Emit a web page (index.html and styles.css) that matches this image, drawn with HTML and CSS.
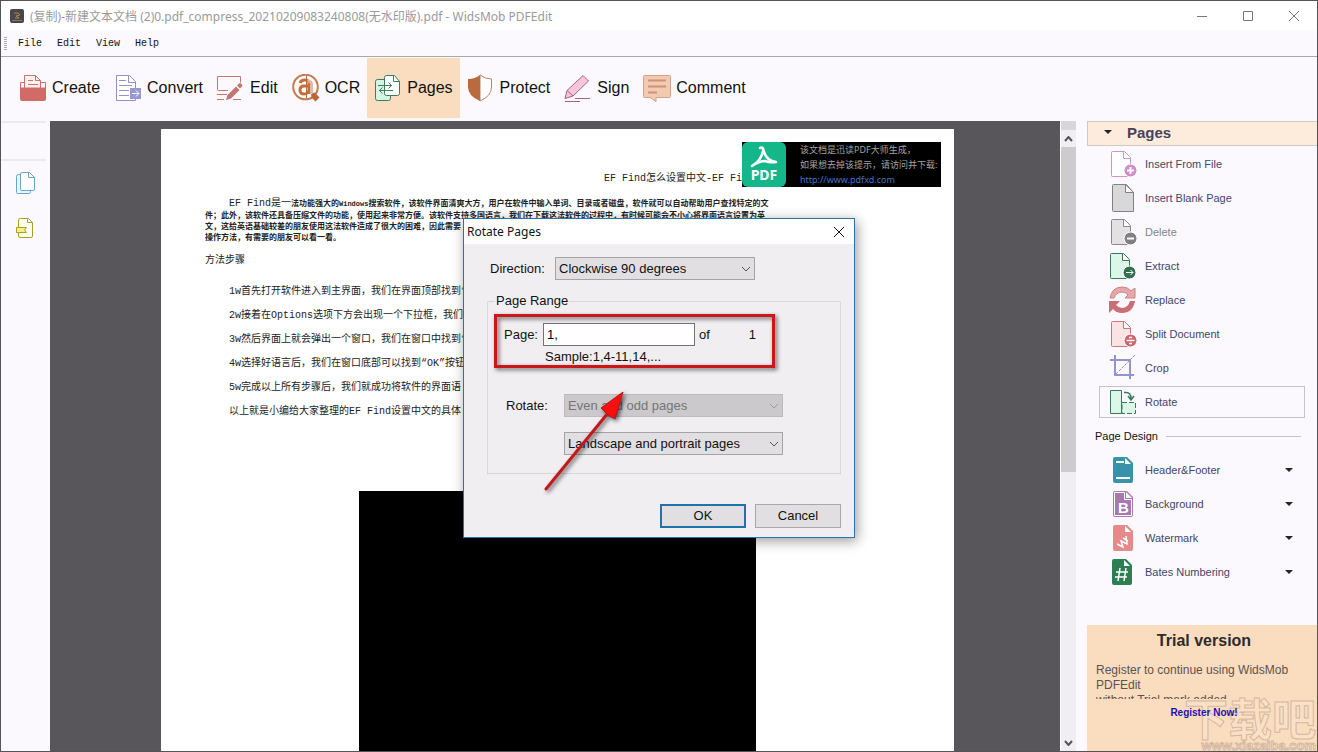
FILE: index.html
```html
<!DOCTYPE html>
<html lang="zh-CN">
<head>
  <meta charset="UTF-8" />
  <meta name="viewport" content="width=device-width, initial-scale=1" />
  <title>WidsMob PDFEdit</title>
  <link rel="stylesheet" href="styles.css">
</head>
<body>

<div class="window">
  <!-- Title bar -->
  <header class="titlebar">
    <svg class="app-icon" width="14" height="14" viewBox="0 0 14 14"><rect width="14" height="14" rx="2" fill="#4b464b"/><path d="M4 4h4l2 2-4 1 3 2H5" fill="none" stroke="#a98a4e"/><path d="M2 11.500h10" stroke="#85757a"/></svg>
    <h1 class="title">(复制)-新建文本文档 (2)0.pdf_compress_20210209083240808(无水印版).pdf - WidsMob PDFEdit</h1>
    <div class="window-buttons">
      <button type="button" aria-label="Minimize"><svg width="12" height="12" viewBox="0 0 12 12"><path d="M1 6.500h10"/></svg></button>
      <button type="button" aria-label="Maximize"><svg width="12" height="12" viewBox="0 0 12 12"><path d="M1.500 1.500h9v9h-9z"/></svg></button>
      <button type="button" aria-label="Close"><svg width="12" height="12" viewBox="0 0 12 12"><path d="M1 1l10 10M11 1L1 11"/></svg></button>
    </div>
  </header>

  <!-- Menu -->
  <nav class="menubar">
    <span class="grip"></span>
    <button type="button">File</button>
    <button type="button">Edit</button>
    <button type="button">View</button>
    <button type="button">Help</button>
  </nav>

  <!-- Toolbar -->
  <div class="toolbar">
    <button type="button">
      <svg width="28" height="28" viewBox="0 0 28 28" fill="none" stroke="#c9716c"><path d="M1.500 14V8.500h4M5.500 14V1.500h11l5 5V14M21.500 8.500h5V14" fill="#fdf0ee"/><path d="M16.500 1.500v5h5M9 6.500h5M9 10.500h10"/><path d="M1 13.500h26V25q0 2-2 2H3q-2 0-2-2z" fill="#d26a66" stroke="none"/></svg>
      <span>Create</span>
    </button>
    <button type="button">
      <svg width="28" height="28" viewBox="0 0 28 28" fill="none" stroke="#9292c6"><path d="M2.500 1.500h13l6 6v19h-19z" fill="#fff"/><path d="M14.500 1.500v7h7M5 6.500h7M5 11.500h13M5 16.500h10M5 21.500h10"/><path d="M16 14h11v11H16z" fill="#9697d5" stroke="none"/><path d="M18 19.500h7M22 16.500l3 3-3 3" stroke="#fff"/></svg>
      <span>Convert</span>
    </button>
    <button type="button">
      <svg width="28" height="28" viewBox="0 0 28 28" fill="none" stroke="#c17772"><path d="M11 16.500H1.500q-1 0-1-1V2.500h23v6M0 20.500h10M0 25.500h7M16 25.500h8" /><path d="M9 26l1.500-5L19 12.500l3.500 3.500L14 24.500zM20 11.500l2-2q1-1 2 0l1 1q1 1 0 2l-2 2z" fill="#c17772" stroke="none"/></svg>
      <span>Edit</span>
    </button>
    <button type="button">
      <svg width="28" height="28" viewBox="0 0 28 28"><circle cx="13.500" cy="13" r="12.300" fill="#fff" stroke="#c67a4d" stroke-width="2"/><path d="M19 20l3.500-1.500 5 5-4 4-4-4z" fill="#bd6736"/><path d="M8 9q1-3 5-3 4 0 4 4v10M17 12h-5q-4 0-4 4t4 4q4 0 5-4" fill="none" stroke="#c26f40" stroke-width="3"/><path d="M15.500 7q5 0 4 5v7" fill="none" stroke="#e7b79d" stroke-width="3"/><path d="M14.500 2v22" stroke="#bd6736"/></svg>
      <span>OCR</span>
    </button>
    <button type="button" class="active">
      <svg width="28" height="28" viewBox="0 0 28 28" fill="none" stroke="#3b7e5c"><path d="M11 5.500H3.500q-2 0-2 2v17q0 2 2 2h11q2 0 2-2V21" fill="#d4f5e3"/><path d="M12.500 1.500h8l5 6v12q0 2-2 2h-11q-2 0-2-2v-16q0-2 2-2z" fill="#fff"/><path d="M19.500 1.500v6h6M4 11.500h14M14.500 8.500l3 3-3 3M19 16.500H5M8.500 13.500l-3 3 3 3" /></svg>
      <span>Pages</span>
    </button>
    <button type="button">
      <svg width="28" height="28" viewBox="0 0 28 28"><path d="M13 1q5 4 11.500 4v8q0 9-11.500 14z" fill="#fff" stroke="#b78668"/><path d="M13 1q-5 4-12 4v8q0 9 12 14z" fill="#ba6a3f"/></svg>
      <span>Protect</span>
    </button>
    <button type="button">
      <svg width="28" height="28" viewBox="0 0 28 28" stroke="#a76280"><path d="M1 24.500l2-8L19 1.500l5.500 5.500L9 22z" fill="#f7c5dc"/><path d="M3 16.500l6 5.500" fill="none"/><path d="M11 24.500h15M1 27.500h15"/></svg>
      <span>Sign</span>
    </button>
    <button type="button">
      <svg width="28" height="28" viewBox="0 0 28 28"><path d="M1.500 1.500h25q1 0 1 1v20q0 1-1 1H13v4l-6-4H1.500q-1 0-1-1v-20q0-1 1-1z" fill="#f3c9b2" stroke="#d3a28b"/><path d="M5 6.500h18M5 12.500h18M5 18.500h9" stroke="#ce9179" stroke-width="2"/></svg>
      <span>Comment</span>
    </button>
  </div>

  <div class="workspace">
    <aside class="rail">
      <button type="button" aria-label="Page thumbnails">
        <svg width="22" height="24" viewBox="0 0 22 24" stroke="#6ba3cf"><path d="M5 3.500H3.500q-2 0-2 2v16q0 1 1 1h12q1 0 1-2v-1" fill="#e9f5fe"/><path d="M7.500 1.500h7l5 5V18q0 1.500-1.500 1.500H7q-1.500 0-1.500-1.500V3q0-1.500 2-1.500z" fill="#fff"/><path d="M13.500 1.500v5h6" fill="none"/></svg>
      </button>
      <button type="button" aria-label="Bookmarks">
        <svg width="22" height="22" viewBox="0 0 22 22" stroke="#a99f28"><path d="M5.500 1.500h8l4 4V19q0 1.500-1.500 1.500H5q-1.500 0-1.500-1.500V3q0-1.500 2-1.500z" fill="#fffef2"/><path d="M12.500 1.500v4h5" fill="none"/><path d="M1.500 10.500h10l-2 2.500 2 2.500h-10z" fill="#f5ef87"/></svg>
      </button>
    </aside>

    <!-- Document -->
    <main class="viewer">
      <article class="page">
        <h2 class="doc-title">EF Find怎么设置中文-EF Find</h2>
        <p class="doc-intro"><span class="lead">EF Find是一</span>法功能强大的<span class="tiny">Windows</span>搜索软件&#xFF0C;该软件界面清爽大方&#xFF0C;用户在软件中输入单词、目录或者磁盘&#xFF0C;软件就可以自动帮助用户查找特定的文<br>
          件&#xFF1B;此外&#xFF0C;该软件还具备压缩文件的功能&#xFF0C;使用起来非常方便。该软件支持多国语言&#xFF0C;我们在下载这法软件的过程中&#xFF0C;有时候可能会不小心将界面语言设置为英<br>
          文&#xFF0C;这给英语基础较差的朋友使用这法软件造成了很大的困难&#xFF0C;因此需要<br>
          操作方法&#xFF0C;有需要的朋友可以看一看。</p>
        <h3 class="doc-heading">方法步骤</h3>
        <div class="doc-steps">
          <p>1w首先打开软件进入到主界面&#xFF0C;我们在界面顶部找到“</p>
          <p>2w接着在Options选项下方会出现一个下拉框&#xFF0C;我们</p>
          <p>3w然后界面上就会弹出一个窗口&#xFF0C;我们在窗口中找到“</p>
          <p>4w选择好语言后&#xFF0C;我们在窗口底部可以找到<q>OK</q>按钮</p>
          <p>5w完成以上所有步骤后&#xFF0C;我们就成功将软件的界面语</p>
          <p>以上就是小编给大家整理的EF Find设置中文的具体</p>
        </div>
        <div class="doc-image"></div>

        <div class="stamp">
          <div class="stamp-logo">
            <svg width="28" height="24" viewBox="0 0 28 24" fill="none" stroke="#fff" stroke-width="2.500" stroke-linecap="round" stroke-linejoin="round"><path d="M10 3q3-2 4 4 3 9 12 10-6 1-11-1-6 0-13 5 9-5 11-15"/></svg>
            <span>PDF</span>
          </div>
          <div class="stamp-text">
            <p>该文档是迅读PDF大师生成&#xFF0C;</p>
            <p>如果想去掉该提示&#xFF0C;请访问并下载:</p>
            <a href="#">http://www.pdfxd.com</a>
          </div>
        </div>
      </article>

      <!-- Rotate dialog -->
      <form class="dialog" role="dialog" aria-labelledby="dialog-title">
        <div class="dialog-title">
          <h2 id="dialog-title">Rotate Pages</h2>
          <button type="button" aria-label="Close dialog"><svg width="12" height="12" viewBox="0 0 12 12"><path d="M1 1l10 10M11 1L1 11"/></svg></button>
        </div>
        <div class="dialog-body">
          <div class="direction">
            <label for="direction">Direction:</label>
            <div class="select">
              <select id="direction"><option>Clockwise 90 degrees</option></select>
              <svg width="10" height="6" viewBox="0 0 10 6"><path d="M1 1l4 4 4-4"/></svg>
            </div>
          </div>
          <fieldset>
            <legend>Page Range</legend>
            <div class="page-range">
              <label for="pages">Page:</label>
              <input type="text" id="pages" value="1,">
              <span>of</span>
              <span class="total">1</span>
            </div>
            <p class="sample">Sample:1,4-11,14,...</p>
            <div class="rotate">
              <label for="parity">Rotate:</label>
              <div class="select">
                <select id="parity" disabled><option>Even and odd pages</option></select>
                <svg width="10" height="6" viewBox="0 0 10 6"><path d="M1 1l4 4 4-4"/></svg>
              </div>
              <div class="select second">
                <select aria-label="Orientation"><option>Landscape and portrait pages</option></select>
                <svg width="10" height="6" viewBox="0 0 10 6"><path d="M1 1l4 4 4-4"/></svg>
              </div>
            </div>
          </fieldset>
          <div class="dialog-actions">
            <button type="button" class="default">OK</button>
            <button type="button">Cancel</button>
          </div>
        </div>
        <div class="highlight"></div>
        <svg class="pointer" width="90" height="106" viewBox="0 0 90 106"><path d="M5 101L67 25" stroke="#c4181b" stroke-width="3" stroke-linecap="round"/><path d="M82 4L74 31L67 27L60 20z" fill="#f5100f" stroke="#b91517"/></svg>
      </form>
    </main>

    <div class="scrollbar">
      <div class="split"></div>
      <button type="button" aria-label="Scroll up"><svg width="9" height="6" viewBox="0 0 9 6"><path d="M1 5l3.500-4L8 5"/></svg></button>
      <div class="thumb"></div>
      <button type="button" class="down" aria-label="Scroll down"><svg width="9" height="6" viewBox="0 0 9 6"><path d="M1 1l3.500 4L8 1"/></svg></button>
    </div>

    <!-- Task panel -->
    <aside class="panel">
      <h2 class="panel-title"><i class="caret"></i>Pages</h2>
      <div class="tools">
        <button type="button">
          <svg width="28" height="28" viewBox="0 0 28 28" stroke="#cf94c9"><path d="M3.500 1.500h12l6 6v19h-18q-1 0-1-1v-23q0-1 1-1z" fill="#fff"/><path d="M14.500 1.500v7h7" fill="none"/><circle cx="21.500" cy="20.500" r="6.500" fill="#cf8dcb" stroke="#fff"/><path d="M18 20.500h7M21.500 17v7" stroke="#fff" stroke-width="2"/></svg>
          <span>Insert From File</span>
        </button>
        <button type="button">
          <svg width="28" height="28" viewBox="0 0 28 28" stroke="#828083"><path d="M4.500.5h13l7 8v19h-20q-1 0-1-1v-25q0-1 1-1z" fill="#d8d7d9"/><path d="M16.500.5v8h8z" fill="#fff"/></svg>
          <span>Insert Blank Page</span>
        </button>
        <button type="button" disabled>
          <svg width="28" height="28" viewBox="0 0 28 28" stroke="#8b898c"><path d="M3.500 1.500h12l6 6v19h-18q-1 0-1-1v-23q0-1 1-1z" fill="#e2e1e3"/><path d="M14.500 1.500v7h7" fill="#fff"/><circle cx="21.500" cy="20.500" r="6.500" fill="#828083" stroke="#fff"/><path d="M18 20.500h7" stroke="#fff" stroke-width="2"/></svg>
          <span>Delete</span>
        </button>
        <button type="button">
          <svg width="28" height="28" viewBox="0 0 28 28" stroke="#397859"><path d="M2.500 1.500h12l6 6v19h-18q-1 0-1-1v-23q0-1 1-1z" fill="#dcf7e8"/><path d="M13.500 1.500v7h7" fill="#fff"/><circle cx="20.500" cy="20.500" r="6.500" fill="#35714f" stroke="#fff"/><path d="M17 20.500h7M21.500 18l2.500 2.500-2.500 2.500" fill="none" stroke="#fff"/></svg>
          <span>Extract</span>
        </button>
        <button type="button">
          <svg width="28" height="28" viewBox="0 0 28 28"><path d="M1 12Q3 1 13 1q6 0 9 4l4-3v10H16l3-3q-2-3-6-3-6 0-8 6z" fill="#e5a9ac" stroke="#cc8185"/><path d="M26 15q-2 12-13 12-6 0-9-4l-4 4V15h11l-4 4q3 3 6 3 6 0 8-7z" fill="#cc6f74"/></svg>
          <span>Replace</span>
        </button>
        <button type="button">
          <svg width="28" height="28" viewBox="0 0 28 28" stroke="#cd777d"><path d="M3.500 1.500h12l6 6v19h-18q-1 0-1-1v-23q0-1 1-1z" fill="#fae3e5"/><path d="M14.500 1.500v7h7" fill="#fff"/><circle cx="21.500" cy="20.500" r="6.500" fill="#cd676f" stroke="#fff"/><path d="M17.500 20.500h8M20 17.500h3M20 23.500h3" stroke="#fff" stroke-width="1.500"/></svg>
          <span>Split Document</span>
        </button>
        <button type="button">
          <svg width="28" height="28" viewBox="0 0 28 28" fill="none" stroke="#9394cb" stroke-width="2"><path d="M6 1v20h19M1 6h20v19"/><path d="M7 20L26 1" stroke-width="1" stroke-dasharray="3 1"/></svg>
          <span>Crop</span>
        </button>
        <button type="button" class="selected">
          <svg width="28" height="28" viewBox="0 0 28 28" fill="none" stroke="#397859"><path d="M1.500 2.500h11v23h-11z" fill="#dcf7e8"/><path d="M13 14.500h13.500v11H13z" fill="#dcf7e8" stroke-dasharray="5 2"/><path d="M15 4.500h2q5 0 5 6M19 8l3 4 3-4" stroke-width="1.500"/></svg>
          <span>Rotate</span>
        </button>
      </div>
      <h3 class="group-title">Page Design</h3>
      <div class="tools">
        <button type="button">
          <svg width="28" height="28" viewBox="0 0 28 28"><path d="M6 1h12l6 6v18q0 2-2 2H6q-2 0-2-2V3q0-2 2-2z" fill="#3892a8"/><path d="M16 2v6h6z" fill="#fff"/><path d="M7 6h8M7 22h14" stroke="#fff" stroke-width="2"/></svg>
          <span>Header&amp;Footer</span><i class="caret"></i>
        </button>
        <button type="button">
          <svg width="28" height="28" viewBox="0 0 28 28"><path d="M6 1h12l6 6v18q0 2-2 2H6q-2 0-2-2V3q0-2 2-2z" fill="#a879af"/><path d="M5.500 2.500h10v7h7v16h-17z" fill="none" stroke="#fff"/><path d="M17 2v6h6z" fill="#fff"/><text x="9" y="23" class="glyph">B</text></svg>
          <span>Background</span><i class="caret"></i>
        </button>
        <button type="button">
          <svg width="28" height="28" viewBox="0 0 28 28"><path d="M6 1h12l6 6v18q0 2-2 2H6q-2 0-2-2V3q0-2 2-2z" fill="#e58a8b"/><path d="M16 2v6h6z" fill="#fff"/><path d="M8 20l6 3-2-6 6 3-1-8M14 14l5 3" fill="none" stroke="#fff" stroke-width="1.500"/></svg>
          <span>Watermark</span><i class="caret"></i>
        </button>
        <button type="button">
          <svg width="28" height="28" viewBox="0 0 28 28"><path d="M5 1h12l6 6v18q0 2-2 2H5q-2 0-2-2V3q0-2 2-2z" fill="#2e7e53"/><path d="M15 2v6h6z" fill="#fff"/><path d="M11 10L9 23M17 10l-2 13M7 14h12M6 19h12" stroke="#fff" stroke-width="1.500"/></svg>
          <span>Bates Numbering</span><i class="caret"></i>
        </button>
      </div>
      <section class="trial">
        <h2>Trial version</h2>
        <p>Register to continue using WidsMob PDFEdit<br>without Trial mark added.</p>
        <a href="#">Register Now!</a>
      </section>
    </aside>
  </div>

  <div class="site-mark">
    <div class="mark-name">下载吧</div>
    <div class="mark-url">www.xiazaiba.com</div>
  </div>
</div>

</body>
</html>
```

FILE: styles.css
```css
* {
  box-sizing: border-box;
}
body {
  margin: 0;
  font-family: "Liberation Sans", "Noto Sans CJK SC", sans-serif;
  font-size: 13px;
  color: #111;
}
h1, h2, h3, p {
  margin: 0;
  font-weight: normal;
}
button {
  border: none;
  padding: 0;
  background: none;
  font: inherit;
  color: inherit;
}
svg {
  display: block;
  flex: none;
}
.window {
  position: relative;
  display: flex;
  flex-direction: column;
  height: 100vh;
  overflow: hidden;
  border: 1px solid #55535a;
  background: #fbf9fd;
}

/* Title bar and menu */
.titlebar {
  display: flex;
  align-items: center;
  height: 29px;
  padding-left: 9px;
  background: #fff;
}
.title {
  flex: 1;
  margin-left: 6px;
  font-family: "Noto Sans", "Noto Sans CJK SC", sans-serif;
  font-size: 12px;
  color: #9a9a9a;
  white-space: nowrap;
}
.window-buttons {
  display: flex;
}
.window-buttons button {
  display: flex;
  justify-content: center;
  width: 46px;
}
.window-buttons path {
  fill: none;
  stroke: #777;
}
.menubar {
  display: flex;
  align-items: center;
  gap: 15px;
  height: 27px;
  padding-left: 3px;
  border-bottom: 1px solid #a9a7ab;
  font-family: "Liberation Mono", monospace;
  font-size: 10px;
}
.grip {
  width: 3px;
  height: 13px;
  margin-right: -4px;
  background: repeating-linear-gradient(#aaa 0 1px, transparent 1px 2px);
}

/* Toolbar */
.toolbar {
  display: flex;
  padding: 1px 11px 3px;
  font-size: 16px;
}
.toolbar button {
  display: flex;
  align-items: center;
  gap: 5px;
  height: 60px;
  padding: 0 7px;
}
.toolbar .active {
  background: #fadcbf;
}

.workspace {
  display: flex;
  flex: 1;
  min-height: 0;
}
.rail {
  display: flex;
  flex-direction: column;
  align-items: center;
  gap: 22px;
  width: 49px;
  padding-top: 50px;
  background: linear-gradient(#eceaee, #eceaee) 0 0 / 45px 2px no-repeat,
    linear-gradient(#eceaee, #eceaee) 0 38px / 45px 2px no-repeat;
}
.viewer {
  position: relative;
  flex: 1;
  overflow: hidden;
  padding: 8px 0 0 111px;
  background: #58565a;
}

/* Document page */
.page {
  position: relative;
  max-width: 793px;
  height: 1122px;
  padding: 42px 44px 0;
  background: #fff;
  color: #222;
  font-family: "Liberation Mono", "Noto Sans CJK SC", monospace;
  font-size: 10px;
  white-space: nowrap;
}
.doc-title {
  padding-left: 399px;
  font-size: 10px;
  line-height: 16px;
}
.doc-intro {
  margin-top: 11px;
  font-size: 8px;
  font-weight: bold;
  line-height: 11px;
}
.lead {
  padding-left: 24px;
  font-size: 10px;
  font-weight: normal;
  line-height: 1;
}
.tiny {
  font-size: 7px;
}
.doc-heading {
  margin-top: 10px;
  font-size: 10px;
  line-height: 16px;
}
.doc-steps {
  margin: 11px 0 0 24px;
  line-height: 24px;
}
.doc-steps q {
  quotes: "“" "”";
}
.doc-image {
  width: 397px;
  height: 300px;
  margin: 67px 0 0 154px;
  background: #000;
}
.stamp {
  position: absolute;
  top: 13px;
  right: 13px;
  display: flex;
  width: 199px;
  height: 45px;
  overflow: hidden;
  background: #000;
}
.stamp-logo {
  display: flex;
  flex-direction: column;
  align-items: center;
  flex: none;
  width: 44px;
  padding-top: 3px;
  border-radius: 6px;
  background: #15b68a;
  color: #fff;
  font: bold 14px/12px "Noto Sans", sans-serif;
}
.stamp-text {
  margin-left: 14px;
  font: 9px/15px "Noto Sans", "Noto Sans CJK SC", sans-serif;
  color: #a3a3a3;
}
.stamp-text a {
  display: block;
  color: #3f74c4;
  text-decoration: none;
}

/* Rotate dialog */
.dialog {
  position: absolute;
  top: 97px;
  left: 413px;
  width: 392px;
  border: 1px solid #2c72a8;
  background: #f0eef1;
  box-shadow: 2px 3px 12px rgba(0, 0, 0, 0.4);
  font-size: 13px;
  line-height: 16px;
}
.dialog-title {
  display: flex;
  align-items: center;
  justify-content: space-between;
  height: 25px;
  padding: 0 9px 0 3px;
  background: #fff;
  font-family: "Noto Sans", sans-serif;
}
.dialog-title h2 {
  font-size: 12px;
}
.dialog-title path {
  fill: none;
  stroke: #111;
}
.dialog-body {
  padding: 13px 13px 9px 23px;
}
.direction {
  display: grid;
  grid-template-columns: 65px 200px;
  align-items: center;
  padding-left: 3px;
}
.select {
  display: grid;
  align-items: center;
}
.select select,
.select svg {
  grid-area: 1 / 1;
}
.select select {
  appearance: none;
  width: 100%;
  height: 23px;
  padding: 0 20px 0 3px;
  border: 1px solid #a5a3a6;
  border-radius: 0;
  background: #e1dfe2;
  font: inherit;
  color: #111;
}
.select select:disabled {
  background: #cbc9cc;
  border-color: #bdbbbe;
  color: #767577;
  opacity: 1;
}
.select svg {
  justify-self: end;
  margin-right: 4px;
  pointer-events: none;
}
.select path {
  fill: none;
  stroke: #555;
}
.select select:disabled + svg {
  opacity: 0.4;
}
fieldset {
  min-width: 0;
  margin: 13px 0 0;
  padding: 14px 7px 18px;
  border: 1px solid #d9d7da;
}
legend {
  padding: 0 1px;
}
.page-range {
  display: flex;
  align-items: center;
  gap: 4px;
  padding-left: 9px;
}
.page-range label {
  width: 35px;
}
.page-range input {
  width: 152px;
  height: 23px;
  padding: 0 3px;
  border: 1px solid #737174;
  background: #fff;
  font: inherit;
}
.page-range .total {
  margin-left: 35px;
}
.sample {
  margin: 3px 0 29px 50px;
}
.rotate {
  display: grid;
  grid-template-columns: 58px 219px;
  align-items: center;
  row-gap: 15px;
  padding-left: 11px;
}
.rotate .second {
  grid-column: 2;
}
.dialog-actions {
  display: flex;
  justify-content: flex-end;
  gap: 9px;
  margin-top: 30px;
}
.dialog-actions button {
  width: 86px;
  height: 24px;
  border: 1px solid #a9a7aa;
  background: #e1dfe2;
}
.dialog-actions .default {
  border: 2px solid #1f72ab;
}
.highlight {
  position: absolute;
  top: 95px;
  left: 30px;
  width: 281px;
  height: 54px;
  border: 3px solid #cb1719;
  filter: drop-shadow(2px 2px 2px rgba(0, 0, 0, 0.6));
}
.pointer {
  position: absolute;
  top: 169px;
  left: 77px;
  filter: drop-shadow(2px 2px 2px rgba(0, 0, 0, 0.6));
}

/* Scroll bar */
.scrollbar {
  display: flex;
  flex-direction: column;
  width: 16px;
  border-left: 1px solid #fff;
  background: #f0eef2;
}
.split {
  height: 9px;
  background: #d8d6d9;
}
.scrollbar button {
  display: flex;
  align-items: center;
  justify-content: center;
  height: 17px;
}
.scrollbar path {
  fill: none;
  stroke: #555;
  stroke-width: 2;
}
.thumb {
  height: 325px;
  background: #cdcbce;
}
.scrollbar .down {
  margin-top: auto;
}

/* Task panel */
.panel {
  display: flex;
  flex-direction: column;
  width: 230px;
  margin-left: 11px;
  font-size: 11px;
  color: #45456b;
}
.panel-title {
  display: flex;
  align-items: center;
  gap: 15px;
  height: 25px;
  padding: 0 0 3px 16px;
  border: 1px solid #cfc9c4;
  border-right: none;
  background: #fdecdb;
  font-size: 15px;
  font-weight: bold;
  color: #46445c;
}
.caret {
  border: 4px solid transparent;
  border-top-color: #25232b;
  border-bottom: none;
}
.tools {
  display: flex;
  flex-direction: column;
  padding: 0 12px;
}
.panel-title + .tools {
  padding-top: 1px;
}
.tools button {
  display: flex;
  align-items: center;
  gap: 8px;
  height: 34px;
  padding: 0 11px 0 9px;
  border: 1px solid transparent;
}
.tools button:disabled {
  color: #858387;
}
.tools .selected {
  height: 32px;
  margin: 1px 0;
  border-color: #c5c3c8;
}
.tools .caret {
  margin-left: auto;
}
.glyph {
  font: bold 15px "Liberation Sans", sans-serif;
  fill: #fff;
}
.group-title {
  display: flex;
  align-items: center;
  gap: 8px;
  height: 34px;
  padding: 0 16px 0 8px;
  font-size: 11px;
  color: #111;
}
.group-title::after {
  content: "";
  flex: 1;
  height: 1px;
  background: #c5c3c8;
}
.trial {
  height: 126px;
  margin-top: auto;
  padding: 6px 5px 0 9px;
  background: #fadcbf;
  text-align: center;
}
.trial h2 {
  font-size: 16px;
  font-weight: bold;
  line-height: 20px;
  color: #2d2b2b;
}
.trial p {
  height: 36px;
  margin: 12px 0 6px;
  overflow: hidden;
  font-size: 12px;
  line-height: 15px;
  text-align: left;
  color: #5c5350;
}
.trial a {
  position: relative;
  z-index: 1;
  font-size: 10px;
  font-weight: bold;
  line-height: 16px;
  color: #1f10b4;
  text-decoration: none;
}

.site-mark {
  position: absolute;
  right: 1px;
  bottom: -1px;
  font-family: "Noto Sans CJK SC", sans-serif;
  font-weight: bold;
  text-align: right;
  color: rgba(255, 235, 215, 0.3);
  -webkit-text-stroke: 1px rgba(170, 145, 125, 0.5);
  pointer-events: none;
}
.mark-name {
  font-size: 44px;
  line-height: 44px;
}
.mark-url {
  font-family: "Liberation Sans", sans-serif;
  font-size: 13px;
  line-height: 13px;
}
```
